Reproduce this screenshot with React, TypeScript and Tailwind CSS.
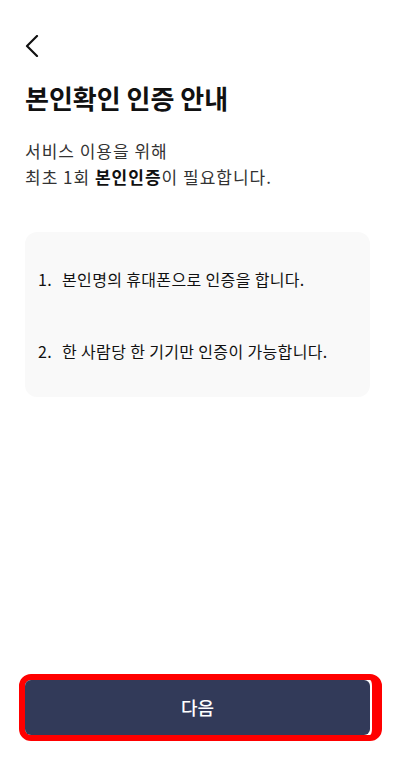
const steps = [
  "본인명의 휴대폰으로 인증을 합니다.",
  "한 사람당 한 기기만 인증이 가능합니다.",
];

export default function App() {
  return (
    <div
      className="w-[406px] h-[766px] bg-white flex flex-col text-[#111]"
      style={{ fontFamily: '"Noto Sans CJK KR", "Noto Sans", sans-serif' }}
    >
      {/* header */}
      <div className="h-[60px] pl-[25px] pt-[35px]">
        <svg width="14" height="22" viewBox="0 0 14 22" fill="none">
          <polyline
            points="12,1 2,11 12,21"
            stroke="#111"
            strokeWidth="2.2"
            strokeLinecap="round"
            strokeLinejoin="round"
          />
        </svg>
      </div>

      <div className="pl-[25px] pr-[36px] flex-1">
        <h1 className="mt-[22px] text-[26px] font-bold leading-[32px]">
          본인확인 인증 안내
        </h1>

        <p className="mt-[24px] text-[17px] leading-[26px] tracking-[1px] text-[#333]">
          서비스 이용을 위해
          <br />
          최초 1회 <strong className="font-bold text-[#111]">본인인증</strong>이 필요합니다.
        </p>

        <ol className="mt-[42px] bg-[#f9f9f9] rounded-[12px] h-[165px] px-[13px] pt-[36px] pb-[35px] flex flex-col justify-between">
          {steps.map((s, i) => (
            <li key={i} className="flex text-[16px] leading-[22px] tracking-[0.35px]">
              <span className="w-[24px]">{i + 1}.</span>
              <span>{s}</span>
            </li>
          ))}
        </ol>
      </div>

      {/* next button */}
      <div className="pl-[19px] pr-[24px] pb-[25px]">
        <div className="border-y-[6px] border-l-[6px] border-r-[10px] border-[#ff0000] rounded-[12px] pr-[2px] bg-white">
          <button className="w-full h-[55px] rounded-[6px] bg-[#323a59] text-white text-[18px] font-medium">
            다음
          </button>
        </div>
      </div>
    </div>
  );
}
